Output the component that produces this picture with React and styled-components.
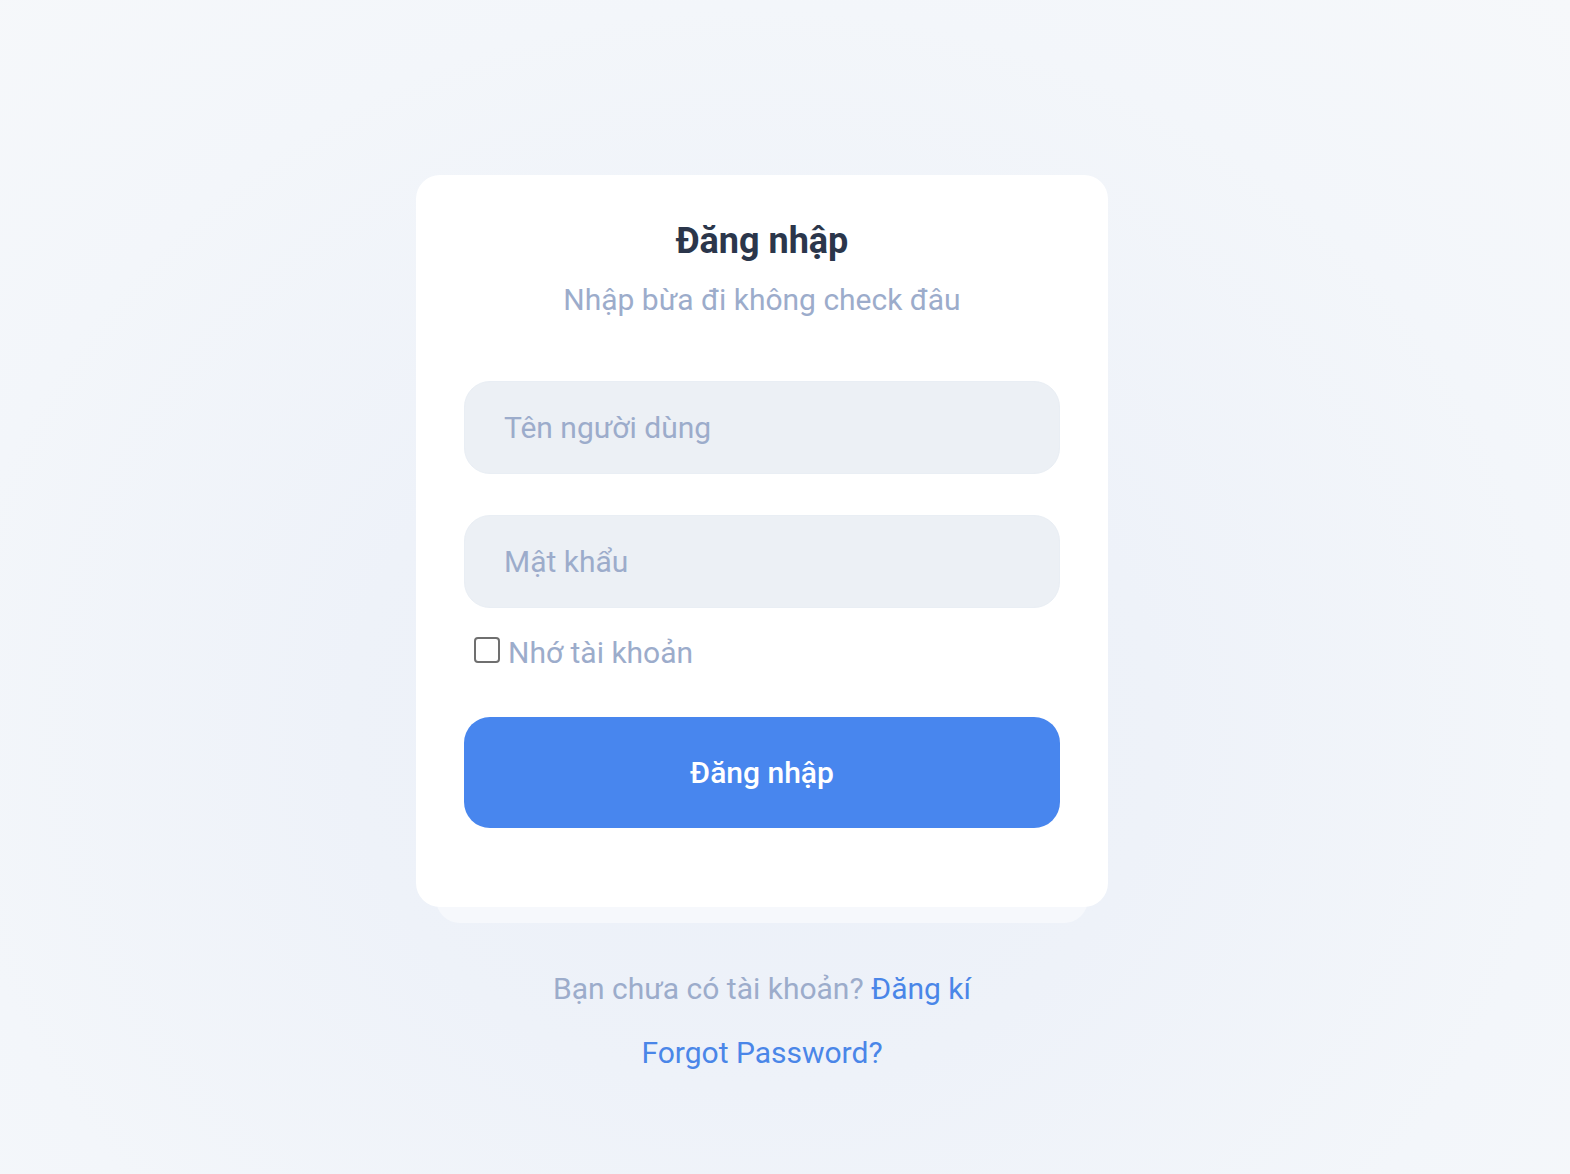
import React from 'react'
import styled, { createGlobalStyle } from 'styled-components'

const GlobalStyle = createGlobalStyle`
  html, body {
    margin: 0;
    padding: 0;
  }
  body {
    font-family: Roboto, "Liberation Sans", sans-serif;
    background: radial-gradient(ellipse at 48% 62%, #ebf0f9 0%, #eef2f9 35%, #f3f6fa 70%, #f6f8fa 100%);
    min-height: 100vh;
  }
`

const Page = styled.div`
  min-height: 100vh;
  display: flex;
  flex-direction: column;
  align-items: center;
  padding: 175px 46px 0 0;
  box-sizing: border-box;
`

const CardStack = styled.div`
  width: 692px;
  display: flex;
  flex-direction: column;
  align-items: center;
`

const Card = styled.form`
  width: 100%;
  box-sizing: border-box;
  background: #ffffff;
  border-radius: 24px;
  padding: 43px 48px 79px;
  display: flex;
  flex-direction: column;
  position: relative;
  z-index: 1;
`

const CardShadow = styled.div`
  width: 652px;
  height: 40px;
  margin-top: -24px;
  background: #f6f8fc;
  border-radius: 0 0 24px 24px;
`

const Title = styled.h1`
  margin: 0;
  text-align: center;
  font-size: 36px;
  font-weight: 700;
  color: #2b364b;
  line-height: 46px;
`

const Subtitle = styled.p`
  margin: 16px 0 0;
  text-align: center;
  font-size: 30px;
  color: #9caccb;
  line-height: 40px;
`

const Field = styled.input`
  width: 100%;
  box-sizing: border-box;
  height: 93px;
  border: 1px solid #e9eef4;
  border-radius: 26px;
  background: #ecf0f5;
  padding: 0 39px;
  font-family: inherit;
  font-size: 30px;
  color: #2b364b;
  outline: none;
  margin-top: ${p => p.$gap}px;

  &::placeholder {
    color: #9caccb;
  }
`

const RememberRow = styled.label`
  display: flex;
  align-items: center;
  gap: 8px;
  margin-top: 25px;
  padding-left: 10px;
  font-size: 30px;
  color: #9caccb;
  line-height: 40px;
`

const Check = styled.span`
  width: 22px;
  height: 22px;
  border: 2px solid #6f6f6f;
  border-radius: 4px;
  box-sizing: content-box;
  flex-shrink: 0;
  margin-top: -6px;
`

const SubmitButton = styled.button`
  margin-top: 44px;
  height: 111px;
  width: 100%;
  border: none;
  border-radius: 26px;
  background: #4886ee;
  color: #ffffff;
  font-family: inherit;
  font-size: 30px;
  font-weight: 500;
  cursor: pointer;
`

const Footer = styled.div`
  margin-top: 46px;
  display: flex;
  flex-direction: column;
  align-items: center;
  gap: 24px;
  font-size: 30px;
  line-height: 40px;
`

const Muted = styled.p`
  margin: 0;
  color: #9caccb;
`

const Link = styled.a`
  color: #4a86e8;
  text-decoration: none;
`

export default function App() {
  return (
    <>
      <GlobalStyle />
      <Page>
        <CardStack>
          <Card onSubmit={e => e.preventDefault()}>
            <Title>Đăng nhập</Title>
            <Subtitle>Nhập bừa đi không check đâu</Subtitle>
            <Field $gap={61} placeholder="Tên người dùng" />
            <Field $gap={41} type="password" placeholder="Mật khẩu" />
            <RememberRow>
              <Check />
              Nhớ tài khoản
            </RememberRow>
            <SubmitButton type="submit">Đăng nhập</SubmitButton>
          </Card>
          <CardShadow />
        </CardStack>
        <Footer>
          <Muted>
            Bạn chưa có tài khoản? <Link href="#">Đăng kí</Link>
          </Muted>
          <Link href="#">Forgot Password?</Link>
        </Footer>
      </Page>
    </>
  )
}
